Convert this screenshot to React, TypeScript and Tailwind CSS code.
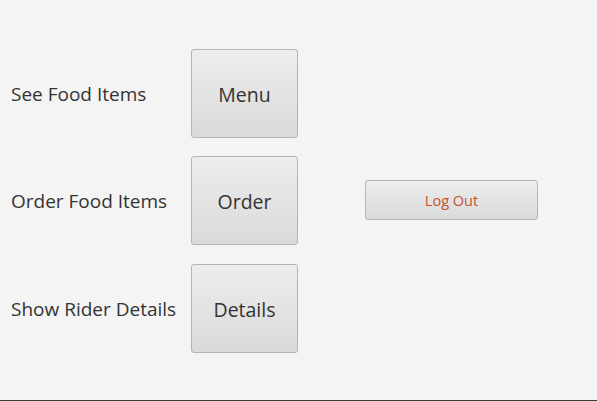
import React from "react";

const font = { fontFamily: '"Open Sans", "Segoe UI", sans-serif' };

function BigButton({ label }: { label: string }) {
  return (
    <button className="w-[107px] h-[89px] pt-[2px] rounded-[3px] border border-[#b4b4b4] bg-gradient-to-b from-[#ededed] to-[#dadada] text-[19.5px] text-[#333333] flex items-center justify-center">
      {label}
    </button>
  );
}

function Row({ text, btn, children }: { text: string; btn: string; children?: React.ReactNode }) {
  return (
    <div className="flex items-center h-[89px]">
      <div className="w-[191px] pl-[11px] pt-[2px] text-[19px] text-[#333333]">{text}</div>
      <BigButton label={btn} />
      {children}
    </div>
  );
}

export default function App() {
  return (
    <div className="w-[597px] h-[401px] bg-[#f4f4f4] border-b border-[#3a3a3a] flex flex-col" style={font}>
      <div className="mt-[49px]">
        <Row text="See Food Items" btn="Menu" />
      </div>
      <div className="mt-[18px]">
        <Row text="Order Food Items" btn="Order">
          <button className="self-start mt-[24px] ml-[67px] w-[173px] h-[40px] pt-[1px] rounded-[3px] border border-[#b4b4b4] bg-gradient-to-b from-[#ededed] to-[#dadada] text-[14.5px] text-[#c4522e] flex items-center justify-center">
            Log Out
          </button>
        </Row>
      </div>
      <div className="mt-[19px]">
        <Row text="Show Rider Details" btn="Details" />
      </div>
    </div>
  );
}
